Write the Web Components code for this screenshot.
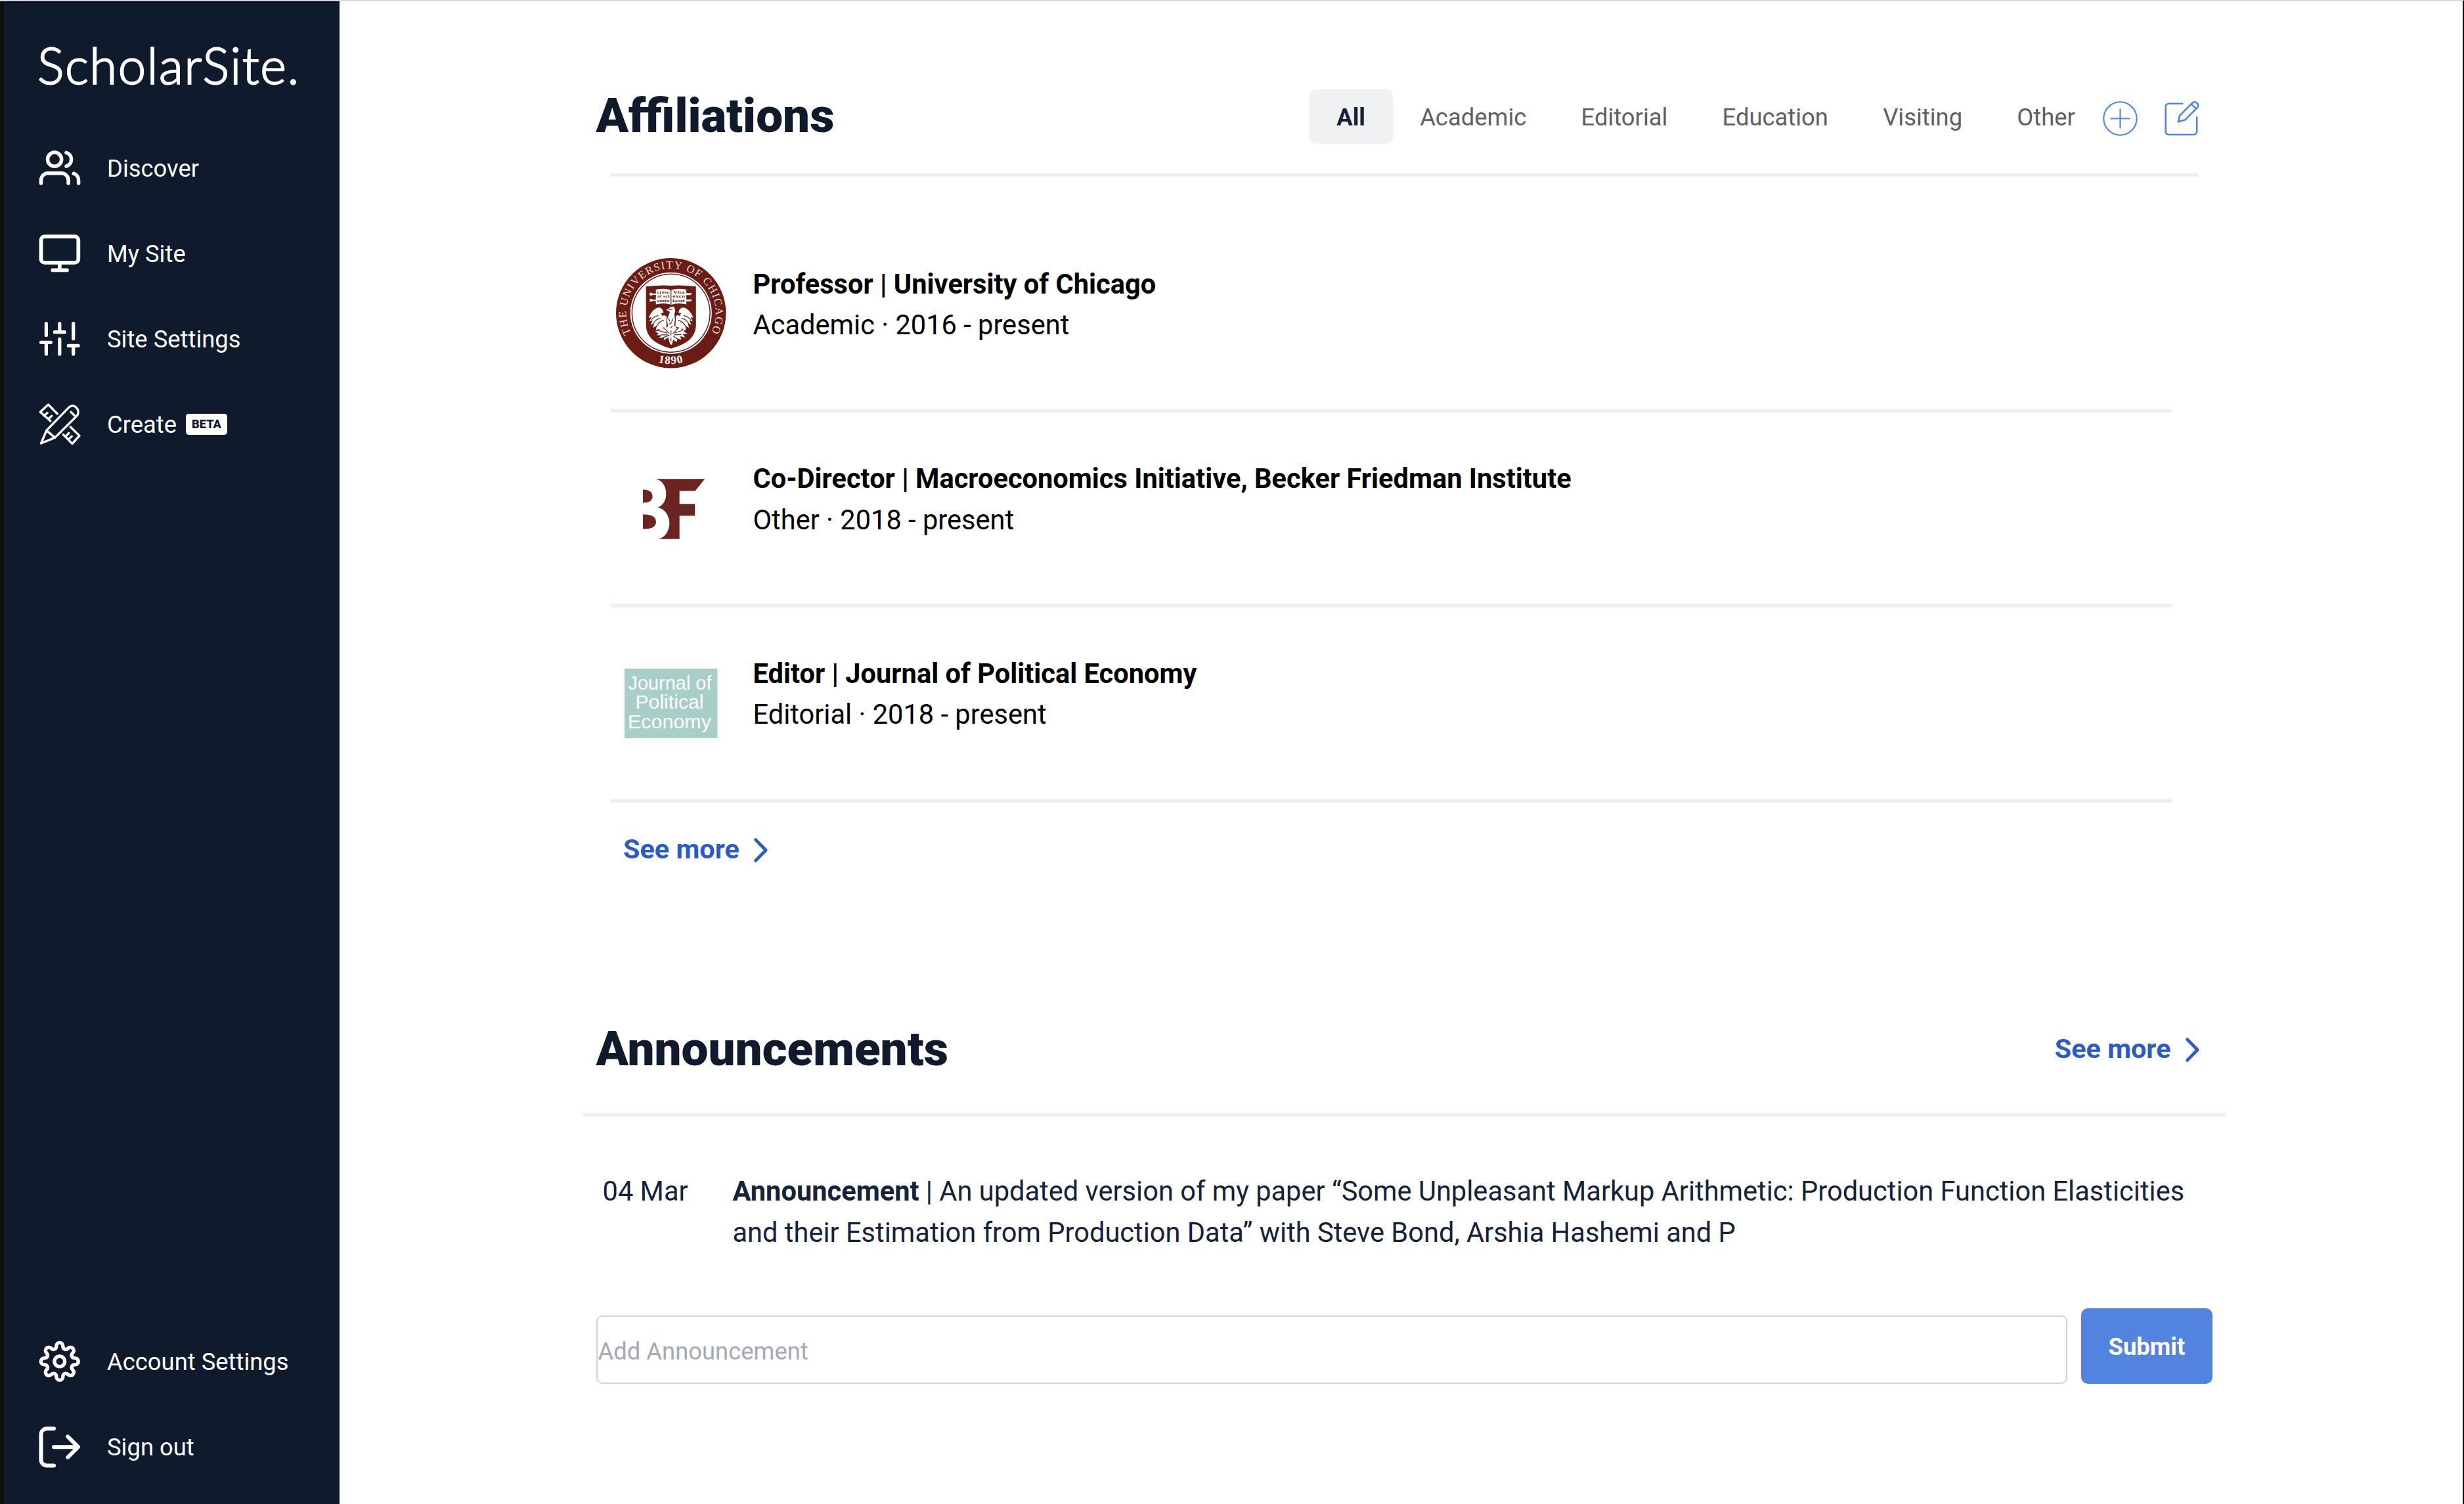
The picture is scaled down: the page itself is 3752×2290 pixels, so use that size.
<!DOCTYPE html>
<html lang="en">
<head>
<meta charset="utf-8">
<title>ScholarSite</title>
<style>
html,body{margin:0;height:100%}
body{font-family:Roboto,"Liberation Sans",sans-serif;background:#fff;overflow:hidden}
</style>
</head>
<body>
<scholar-app></scholar-app>
<script>
const define = (name, html, setup) => {
  const t = document.createElement('template');
  t.innerHTML = html;
  customElements.define(name, class extends HTMLElement {
    constructor() {
      super();
      this.attachShadow({ mode: 'open' }).appendChild(t.content.cloneNode(true));
    }
    connectedCallback() { if (setup) setup.call(this, this.shadowRoot); }
  });
};

/* Eight-lobed gear outline, centred on (cx, cy). */
const gearPath = (cx, cy) => {
  const rot = (x, y, a) => {
    const c = Math.cos(a), s = Math.sin(a);
    return (cx + x * c - y * s).toFixed(2) + ' ' + (cy + x * s + y * c).toFixed(2);
  };
  let d = 'M' + rot(-5, -23.5, 0);
  for (let i = 0; i < 8; i++) {
    const a = i * Math.PI / 4;
    d += 'A5 5 0 0 1 ' + rot(5, -23.5, a) + 'C' + rot(5, -18.5, a) + ' ' +
      rot(-5, -18.5, a + Math.PI / 4) + ' ' + rot(-5, -23.5, a + Math.PI / 4);
  }
  return d + 'Z';
};

const icons = {
  users: [64, 64, 5.5, '<circle cx="24.1" cy="18.7" r="10.6"/><path d="M42 8.3A10.9 10.9 0 0 1 42 29.1M3.5 54.9V50.3A10.5 10.5 0 0 1 14 39.8H34.6A10.5 10.5 0 0 1 45.1 50.3V54.9M53.2 40.2A10.5 10.5 0 0 1 60.6 50.3V54.9"/>'],
  monitor: [64, 64, 5.8, '<rect x="3.5" y="6.2" width="56.8" height="39.6" rx="5.4"/><path d="M31.8 45.8V57.3M21.2 57.3H43"/>'],
  sliders: [64, 64, 5.2, '<path d="M11.4 8.6V26.4M3.5 37.3H18.3M11.4 37.3V55.1M31.8 8.6V21.7M24.4 21.7H39.3M31.8 32.3V55.1M52.7 8.6V31.7M45.3 42.3H60.2M52.7 42.3V55.1"/>'],
  create: [64, 64, 3.4, '<path d="M3.6 61L11.8 41.4L46.3 5.9Q51.3 1.3 57 6.2Q62.4 12.4 58.6 18.6L24.6 52.4ZM11.8 41.4L24.6 52.4M48.9 13.3L54.5 18.8M28.3 16L14.5 2L2.3 13.3L17.8 27M8 19L13.1 14.6M14.2 24L19.9 19.2M48.2 36L62 49.4L51 61.6L37.4 47.8M40.7 51L45.8 45.4M45 55.4L50.2 50.2"/>'],
  gear: [64, 64, 5.4, '<circle cx="31.8" cy="31.9" r="7.9"/><path d="' + gearPath(31.8, 31.9) + '"/>'],
  signout: [64, 64, 6, '<path d="M23 4.2H12.2A8.7 8.7 0 0 0 3.5 12.9V51.8A8.7 8.7 0 0 0 12.2 60.5H23M23 32.2H59.6M44.2 16.4L60 32.2L44.2 48"/>'],
  plus: [53, 53, 2.1, '<circle cx="26.5" cy="26.5" r="25.2"/><path d="M12.4 26.5H40.6M26.5 12.4V40.6"/>'],
  edit: [53, 53, 2.6, '<path d="M27.4 3.7H6.7A5 5 0 0 0 1.7 8.7V46A5 5 0 0 0 6.7 51H44.2A5 5 0 0 0 49.2 46V24.6M21 31.6L23.2 21.8L42.2 2.9Q46 -.2 49.4 3Q52.8 6.5 49.8 10.2L31.2 28.6ZM41 4.6L48.2 11.6"/>'],
  chevron: [21, 37, 4.8, '<path d="M2.6 2.6L18.2 18.5L2.6 34.4"/>']
};
define('ss-icon', '<style>:host{display:block;flex:none}svg{display:block;overflow:visible}</style><span></span>', function (r) {
  const [w, h, s, body] = icons[this.getAttribute('name')];
  r.querySelector('span').innerHTML = `<svg width="${w}" height="${h}" viewBox="0 0 ${w} ${h}" fill="none" stroke="currentColor" stroke-width="${s}" stroke-linecap="round" stroke-linejoin="round">${body}</svg>`;
});

define('ss-rule', '<style>:host{display:block;flex:none;height:5.5px;background:#efefef}</style>');

define('nav-item', `<style>
:host{display:flex;align-items:center;height:130px;padding-left:52.5px;color:#fff;font-size:36.4px;line-height:54px}
.mark{margin-right:40.5px}
.label{display:flex;align-items:center;margin-top:2px}
</style><div class="mark"></div><div class="label"><slot></slot></div>`, function (r) {
  r.querySelector('.mark').innerHTML = `<ss-icon name="${this.getAttribute('icon')}"></ss-icon>`;
});
define('beta-badge', `<style>
:host{display:flex;align-items:center;justify-content:center;width:63px;height:31.5px;margin:-2px 0 0 14px;border-radius:4.5px;background:#fff;color:#0f1a2e;font-size:18.2px;font-weight:900;line-height:1}
</style><slot></slot>`);

define('side-bar', `<style>
:host{display:flex;flex-direction:column;flex:none;box-sizing:border-box;width:517px;border-left:6px solid #0d0d0d;border-top:2px solid #02040f;background:#0f1a2d}
.logo{height:187px;box-sizing:border-box;padding:49px 0 0 51px;color:#fff;font:300 76px/92px Lato,sans-serif;letter-spacing:1.6px;white-space:nowrap;-webkit-text-stroke:2px #fff}
.space{flex:1}
.foot{padding-bottom:22.5px}
</style>
<div class="logo">ScholarSite.</div>
<nav>
<nav-item icon="users">Discover</nav-item>
<nav-item icon="monitor">My Site</nav-item>
<nav-item icon="sliders">Site Settings</nav-item>
<nav-item icon="create">Create<beta-badge>BETA</beta-badge></nav-item>
</nav>
<div class="space"></div>
<div class="foot">
<nav-item icon="gear">Account Settings</nav-item>
<nav-item icon="signout">Sign out</nav-item>
</div>`);

define('section-title', '<style>:host{display:block;font-size:72.8px;font-weight:900;line-height:84px;color:#0f1a2d}</style><slot></slot>');
define('filter-tab', `<style>
:host{display:flex;align-items:center;box-sizing:border-box;height:83px;padding:2px 41.6px 0;border-radius:10px;font-size:36.4px;color:#5f5f5f}
:host([active]){background:#eff1f3;color:#13203a;font-weight:700}
</style><slot></slot>`);
define('see-more', `<style>
:host{display:flex;align-items:center;gap:22px;color:#2a5bc7;font-size:41.4px;font-weight:700;line-height:62px}
ss-icon{margin-top:3px}
</style><span>See more</span><ss-icon name="chevron"></ss-icon>`);

define('affiliation-row', `<style>
:host{display:flex;align-items:center;height:291.2px;color:#000;font-size:41.6px;line-height:62.4px}
.mark{width:187px;display:flex;justify-content:center}
.text{align-self:flex-start;padding:70px 0 0 31px}
.title{font-weight:700}
</style><div class="mark"><slot name="mark"></slot></div>
<div class="text"><div class="title"><slot name="title"></slot></div><div><slot></slot></div></div>`);

define('seal-mark', `<style>:host,svg{display:block}</style>
<svg width="167.5" height="167.5" viewBox="85 69.5 502 502">
<defs><path id="up" d="M154 413A204 204 0 1 1 518 413"/><path id="down" d="M104 320.5A232 232 0 0 0 568 320.5"/></defs>
<circle cx="336" cy="320.5" r="251" fill="#6b1c14"/>
<circle cx="336" cy="320.5" r="186" fill="#fff"/>
<circle cx="336" cy="320.5" r="178" fill="none" stroke="#6b1c14" stroke-width="4.5"/>
<g font-family="'Liberation Serif',serif" fill="#eadbd8">
<text font-size="50" textLength="826"><textPath href="#up" textLength="826">THE UNIVERSITY OF CHICAGO</textPath></text>
<text font-size="52" font-weight="bold" fill="#fff" text-anchor="middle" letter-spacing="4"><textPath href="#down" startOffset="50%">1890</textPath></text>
</g>
<path d="M222 199Q280 192 336 195Q392 192 450 199V372C450 430 410 462 336 482C262 462 222 430 222 372Z" fill="#6b1c14"/>
<g fill="#fff">
<path d="M267 213Q305 206 334 215V282Q305 271 267 281ZM338 215Q368 206 406 213V281Q368 271 338 282Z"/>
<circle cx="245" cy="234" r="7"/><circle cx="245" cy="262" r="7"/>
<path d="M246 231h22v6h-22zM246 259h22v6h-22zM406 229l27 1l-8 8h-19zM406 258l27 1l-8 8h-19z"/>
</g>
<g font-family="'Liberation Serif',serif" font-weight="bold" font-size="17" fill="#6b1c14">
<text x="272" y="230.5" textLength="57" lengthAdjust="spacingAndGlyphs">cresc</text><text x="272" y="250.5" textLength="57" lengthAdjust="spacingAndGlyphs">at sci</text><text x="272" y="270.5" textLength="57" lengthAdjust="spacingAndGlyphs">entia</text>
<text x="346" y="230.5" textLength="52" lengthAdjust="spacingAndGlyphs">Vita</text><text x="343" y="250.5" textLength="58" lengthAdjust="spacingAndGlyphs">exco</text><text x="343" y="270.5" textLength="57" lengthAdjust="spacingAndGlyphs">latur</text>
</g>
<g fill="#fff">
<path d="M302 318C298 302 290 294 278 295C258 300 243 318 234 342L247 338L237 358L252 354L243 374L259 368L254 388L271 378L267 399L286 391C300 385 311 385 318 380L316 334L303 330L296 333L290 321Z"/>
<path d="M370 318C374 302 382 294 394 295C414 300 429 318 438 342L425 338L435 358L420 354L429 374L413 368L418 388L401 378L405 399L386 391C372 385 361 385 354 380L356 334L369 330L376 333L382 321Z"/>
<path d="M314 305L325 302Q331 290 342 293L349 290L352 299Q359 309 351 325L355 352L348 389L336 397L323 386L318 350L331 315Z"/>
<path d="M336 392L309 377L303 392L279 382L285 400L262 405L280 413L270 422L292 421L282 435L304 430L303 445L323 431L332 463L340 465L346 442L361 453L366 436L383 442L378 426L401 432L390 417L411 414L394 405L402 394L384 397L384 382L364 394L354 377Z"/>
</g>
<g fill="none" stroke="#6b1c14" stroke-width="3.6" stroke-linecap="round">
<path d="M246 352Q258 335 277 332M254 370Q268 347 287 345M268 382Q282 358 303 354M426 352Q414 335 395 332M418 370Q404 347 385 345M404 382Q390 358 369 354M327 304H341M318 330L316 384M356 330L355 378M326 345L330 357M344 347L339 360M328 371L338 365M342 380L334 389M285 402L317 411M292 420L320 420M306 390L327 413M304 431L327 422M387 400L353 411M382 418L350 420M366 392L345 413M364 438L348 427M336 400V421M336 434V448"/>
</g>
</svg>`);
define('bf-mark', `<style>:host{display:block;margin:3px 0 0 8px}svg{display:block}</style>
<svg width="94.6" height="92" viewBox="164 118.5 265 276" preserveAspectRatio="none" fill="#6b241f">
<path d="M219 119H428L387 174H320V233H386V287H320V394H229C260 386 277 355 277 321C277 286 258 258 228 249C250 239 263 218 263 187C263 151 246 126 219 119Z"/>
<path d="M164 168C190 168 205 178 205 199C205 219 190 228 164 228ZM164 281C201 281 220 292 220 315C220 337 201 350 164 347Z"/>
</svg>`);
define('jpe-mark', `<style>:host{display:block;margin-top:1px}svg{display:block}</style>
<svg width="141.4" height="106" viewBox="0 0 141.4 106"><rect width="141.4" height="106" fill="#a8cec9"/>
<g font-family="'Liberation Sans',sans-serif" font-size="30" fill="#fff">
<text x="5.5" y="32" textLength="127" lengthAdjust="spacingAndGlyphs">Journal of</text><text x="16.5" y="61.5" textLength="104" lengthAdjust="spacingAndGlyphs">Political</text><text x="5" y="91.5" textLength="127" lengthAdjust="spacingAndGlyphs">Economy</text></g></svg>`);

define('affiliations-section', `<style>
:host{display:block}
header{display:flex;align-items:center;height:83px;padding-right:401.5px}
section-title{margin:0 auto 3px 0}
.tabs{display:flex}
ss-icon{color:#4f83e6;margin-top:5.5px}
.edit{margin-left:41px}
.list{margin-left:21px;width:2378.5px}
.top{margin:44.5px 0 62.5px 21px;width:2419.5px}
see-more{margin:40px 0 0 20.5px}
</style>
<header><section-title>Affiliations</section-title>
<div class="tabs"><filter-tab active>All</filter-tab><filter-tab>Academic</filter-tab><filter-tab>Editorial</filter-tab><filter-tab>Education</filter-tab><filter-tab>Visiting</filter-tab><filter-tab>Other</filter-tab></div>
<ss-icon name="plus"></ss-icon><ss-icon name="edit" class="edit"></ss-icon></header>
<ss-rule class="top"></ss-rule>
<div class="list">
<affiliation-row><seal-mark slot="mark"></seal-mark><span slot="title">Professor | University of Chicago</span>Academic · 2016 - present</affiliation-row><ss-rule></ss-rule>
<affiliation-row><bf-mark slot="mark"></bf-mark><span slot="title">Co-Director | Macroeconomics Initiative, Becker Friedman Institute</span>Other · 2018 - present</affiliation-row><ss-rule></ss-rule>
<affiliation-row><jpe-mark slot="mark"></jpe-mark><span slot="title">Editor | Journal of Political Economy</span>Editorial · 2018 - present</affiliation-row><ss-rule></ss-rule>
<see-more></see-more>
</div>`);

define('announcement-form', `<style>
:host{display:flex;align-items:flex-end;gap:20.7px}
input{box-sizing:border-box;width:2240.5px;height:104px;margin:0;padding:5px 0 0 1px;border:2px solid #d3d7dc;border-radius:9px;background:#fff;font:400 36.4px Roboto,sans-serif;outline:0}
input::placeholder{color:#a3aab5;opacity:1}
button{box-sizing:border-box;width:200.5px;height:115px;padding:2px 0 0;border:0;border-radius:10px;background:#5283df;color:#fff;font:700 36.4px Roboto,sans-serif}
</style><input placeholder="Add Announcement"><button>Submit</button>`);
define('announcements-section', `<style>
:host{display:block}
header{display:flex;align-items:center;justify-content:space-between;height:84px;padding-right:401.5px}
ss-rule{margin:55.6px 0 83px -20.8px;width:2502.5px}
.item{display:flex;color:#16223a;font-size:41.6px;line-height:62.4px}
.date{width:198px;padding-left:10px}
.body{width:2230px}
b{font-weight:700}
announcement-form{margin-top:83.3px}
</style>
<header><section-title>Announcements</section-title><see-more></see-more></header>
<ss-rule></ss-rule>
<div class="item"><div class="date">04 Mar</div><div class="body"><b>Announcement</b> | An updated version of my paper “Some Unpleasant Markup Arithmetic: Production Function Elasticities and their Estimation from Production Data” with Steve Bond, Arshia Hashemi and P</div></div>
<announcement-form></announcement-form>`);

define('scholar-app', `<style>
:host{display:flex;box-sizing:border-box;width:3752px;height:2290px;border-top:2px solid #d9dae0;border-right:2px solid #0d0d0d;background:#fff}
main{flex:1;padding:134px 0 0 390.5px}
announcements-section{margin-top:231.8px}
</style><side-bar></side-bar><main><affiliations-section></affiliations-section><announcements-section></announcements-section></main>`);
</script>
</body>
</html>
